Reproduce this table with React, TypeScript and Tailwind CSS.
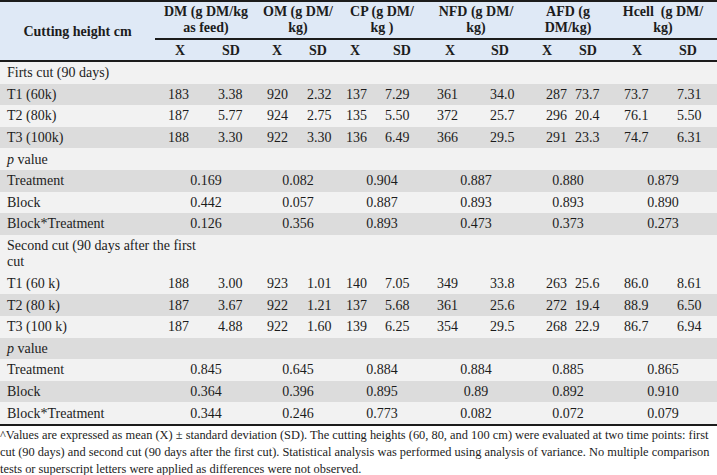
const GRID =
  "grid grid-cols-[155px_50px_52px_40px_42px_32px_62px_34px_66px_38px_44px_44px_58px]";

const GREY = "bg-[#dcdcdc]";
const LIGHT = "bg-[#f2f2f2]";

// left padding for each data sub-column (X / SD of each group)
const dataPad = [
  "pl-[13px]",
  "pl-[13px]",
  "pl-[10px]",
  "pl-[10px]",
  "pl-[7px]",
  "pl-[14px]",
  "pl-[4px]",
  "pl-[23px]",
  "pl-[13px]",
  "pl-[4px]",
  "pl-[9px]",
  "pl-[18px]",
];

// shift for the X / SD header labels
const subPad = ["", "", "", "", "", "", "", "", "pr-[10px]", "pr-[10px]", "", ""];

// shift for group-centred cells (headers and p values)
const groupPad = ["", "", "pr-[8px]", "pr-[14px]", "pr-[12px]", "pr-[6px]"];

const groups = [
  ["DM (g DM/kg", "as feed)"],
  ["OM (g DM/", "kg)"],
  ["CP (g DM/", "kg )"],
  ["NFD (g DM/", "kg)"],
  ["AFD (g", "DM/kg)"],
  ["Hcell  (g DM/", "kg)"],
];

type Row =
  | { kind: "section"; label: React.ReactNode; bg: string; tall?: boolean }
  | { kind: "data"; label: string; values: string[]; bg: string }
  | { kind: "p"; label: string; values: string[]; bg: string };

const rows: Row[] = [
  { kind: "section", label: "Firts cut (90 days)", bg: LIGHT },
  {
    kind: "data",
    label: "T1 (60k)",
    values: ["183", "3.38", "920", "2.32", "137", "7.29", "361", "34.0", "287", "73.7", "73.7", "7.31"],
    bg: GREY,
  },
  {
    kind: "data",
    label: "T2 (80k)",
    values: ["187", "5.77", "924", "2.75", "135", "5.50", "372", "25.7", "296", "20.4", "76.1", "5.50"],
    bg: LIGHT,
  },
  {
    kind: "data",
    label: "T3 (100k)",
    values: ["188", "3.30", "922", "3.30", "136", "6.49", "366", "29.5", "291", "23.3", "74.7", "6.31"],
    bg: GREY,
  },
  {
    kind: "section",
    label: (
      <>
        <i>p</i> value
      </>
    ),
    bg: LIGHT,
  },
  { kind: "p", label: "Treatment", values: ["0.169", "0.082", "0.904", "0.887", "0.880", "0.879"], bg: GREY },
  { kind: "p", label: "Block", values: ["0.442", "0.057", "0.887", "0.893", "0.893", "0.890"], bg: LIGHT },
  { kind: "p", label: "Block*Treatment", values: ["0.126", "0.356", "0.893", "0.473", "0.373", "0.273"], bg: GREY },
  {
    kind: "section",
    label: (
      <>
        Second cut (90 days after the first
        <br />
        cut
      </>
    ),
    bg: LIGHT,
    tall: true,
  },
  {
    kind: "data",
    label: "T1 (60 k)",
    values: ["188", "3.00", "923", "1.01", "140", "7.05", "349", "33.8", "263", "25.6", "86.0", "8.61"],
    bg: LIGHT,
  },
  {
    kind: "data",
    label: "T2 (80 k)",
    values: ["187", "3.67", "922", "1.21", "137", "5.68", "361", "25.6", "272", "19.4", "88.9", "6.50"],
    bg: GREY,
  },
  {
    kind: "data",
    label: "T3 (100 k)",
    values: ["187", "4.88", "922", "1.60", "139", "6.25", "354", "29.5", "268", "22.9", "86.7", "6.94"],
    bg: LIGHT,
  },
  {
    kind: "section",
    label: (
      <>
        <i>p</i> value
      </>
    ),
    bg: GREY,
  },
  { kind: "p", label: "Treatment", values: ["0.845", "0.645", "0.884", "0.884", "0.885", "0.865"], bg: LIGHT },
  { kind: "p", label: "Block", values: ["0.364", "0.396", "0.895", "0.89", "0.892", "0.910"], bg: GREY },
  { kind: "p", label: "Block*Treatment", values: ["0.344", "0.246", "0.773", "0.082", "0.072", "0.079"], bg: LIGHT },
];

function BodyRow({ row }: { row: Row }) {
  if (row.kind === "section") {
    return (
      <div
        className={`col-span-13 flex items-center pl-[7px] ${row.bg} ${
          row.tall ? "h-[38px] leading-[16px]" : "h-[21.6px]"
        }`}
      >
        <div>{row.label}</div>
      </div>
    );
  }
  return (
    <>
      <div className={`flex h-[21.6px] items-center pl-[7px] ${row.bg}`}>{row.label}</div>
      {row.kind === "data"
        ? row.values.map((v, i) => (
            <div key={i} className={`flex h-[21.6px] items-center ${dataPad[i]} ${row.bg}`}>
              {v}
            </div>
          ))
        : row.values.map((v, i) => (
            <div
              key={i}
              className={`col-span-2 flex h-[21.6px] items-center justify-center ${groupPad[i]} ${row.bg}`}
            >
              {v}
            </div>
          ))}
    </>
  );
}

export default function App() {
  return (
    <div className="h-[475px] w-[717px] overflow-hidden bg-white font-['Liberation_Serif',serif] text-[14px] text-[#1c1c1c]">
      <div className={`${GRID} border-y-2 border-[#1c1c1c] bg-[#dfe9f6] font-bold`}>
        <div className="row-span-2 flex items-center justify-center">Cutting height cm</div>
        {groups.map((g, i) => (
          <div
            key={i}
            className={`col-span-2 flex h-[38px] flex-col items-center justify-center whitespace-pre border-b-2 border-[#1c1c1c] leading-[16px] ${groupPad[i]}`}
          >
            <span>{g[0]}</span>
            <span>{g[1]}</span>
          </div>
        ))}
        {["X", "SD", "X", "SD", "X", "SD", "X", "SD", "X", "SD", "X", "SD"].map((t, i) => (
          <div key={i} className={`flex h-[20px] items-center justify-center ${subPad[i]}`}>
            {t}
          </div>
        ))}
      </div>

      <div className={`${GRID} border-b-2 border-[#1c1c1c]`}>
        {rows.map((r, i) => (
          <BodyRow key={i} row={r} />
        ))}
      </div>

      <p className="whitespace-nowrap pt-[1px] text-[12.4px] leading-[17px]">
        ^Values are expressed as mean (X) ± standard deviation (SD). The cutting heights (60, 80, and 100 cm) were
        evaluated at two time points: first
        <br />
        cut (90 days) and second cut (90 days after the first cut). Statistical analysis was performed using analysis
        of variance. No multiple comparison
        <br />
        tests or superscript letters were applied as differences were not observed.
      </p>
    </div>
  );
}
